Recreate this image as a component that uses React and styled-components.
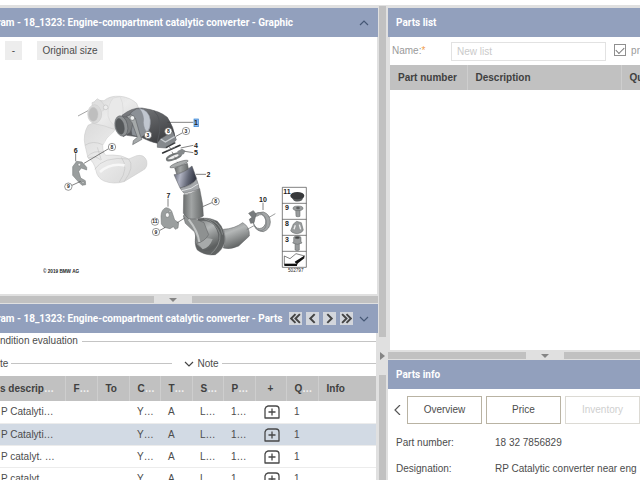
import { useState } from 'react'
import styled, { createGlobalStyle, ThemeProvider } from 'styled-components'

const theme = {
  colors: {
    header: '#92a0bd',
    bar: '#c1c1c1',
    edge: '#e0e0e0',
    muted: '#9a9a9a',
    selected: '#d2dae4',
  },
}

const partRows = [
  { name: 'P Catalyti…', c: 'Y…', t: 'A', s: 'L…', p: '1…', q: '1' },
  { name: 'P Catalyti…', c: 'Y…', t: 'A', s: 'L…', p: '1…', q: '1' },
  { name: 'P catalyt. …', c: 'Y…', t: 'A', s: 'L…', p: '1…', q: '1' },
  { name: 'P catalyt', c: 'Y…', t: 'A', s: 'L…', p: '1…', q: '1' },
]

const partColumns = [
  { label: 's descrip', cut: true, width: 65 },
  { label: 'F', cut: true, width: 32 },
  { label: 'To', width: 32 },
  { label: 'C', cut: true, width: 31 },
  { label: 'T', cut: true, width: 32 },
  { label: 'S', cut: true, width: 31 },
  { label: 'P', cut: true, width: 32 },
  { label: '+', width: 31, center: true },
  { label: 'Q', cut: true, width: 32 },
  { label: 'Info' },
]

const Chevron = ({ points, size = 10, stroke = '#465875', weight = 1.2 }) => (
  <svg width={size} height={size} viewBox="0 0 10 10" fill="none" stroke={stroke} strokeWidth={weight} aria-hidden="true">
    {points.map(p => <polyline key={p} points={p} />)}
  </svg>
)

const PlusBox = () => (
  <svg width="16" height="14" viewBox="0 0 16 14" fill="none" stroke="#484848" aria-hidden="true">
    <path d="M1 13V4Q1.5 1.500 4 1H12Q15 1 15 4V13Z" strokeWidth="1.3" strokeLinejoin="round" />
    <path d="M8 3.5V10.5M4.5 7H11.5" strokeWidth="1.3" />
  </svg>
)

const Callout = ({ x, y, children }) => (
  <g>
    <circle cx={x} cy={y} r="11" fill="#fff" stroke="#555" strokeWidth="1.8" />
    <text x={x} y={y + 5} textAnchor="middle" fontSize="15">{children}</text>
  </g>
)

const Diagram = () => (
  <DiagramSvg viewBox="-51 0 831 570" role="img" aria-label="Catalytic converter diagram">
    <defs>
      <linearGradient id="ghost" x1="0" y1="0" x2="1" y2="1">
        <stop offset="0" stopColor="#dadada" />
        <stop offset="0.45" stopColor="#ebebeb" />
        <stop offset="1" stopColor="#d4d4d4" />
      </linearGradient>
      <linearGradient id="dark" x1="0" y1="0" x2="0.6" y2="1">
        <stop offset="0" stopColor="#85878b" />
        <stop offset="0.35" stopColor="#66686b" />
        <stop offset="1" stopColor="#3d3e41" />
      </linearGradient>
      <linearGradient id="pipe" x1="0" y1="0" x2="1" y2="0">
        <stop offset="0" stopColor="#6b6e6e" />
        <stop offset="0.4" stopColor="#a2a5a5" />
        <stop offset="1" stopColor="#646767" />
      </linearGradient>
      <linearGradient id="flex" x1="0" y1="0" x2="1" y2="0.2">
        <stop offset="0" stopColor="#555969" />
        <stop offset="0.35" stopColor="#b0b3c2" />
        <stop offset="0.7" stopColor="#646877" />
        <stop offset="1" stopColor="#343744" />
      </linearGradient>
      <linearGradient id="outlet" x1="0" y1="0" x2="0.4" y2="1">
        <stop offset="0" stopColor="#808383" />
        <stop offset="0.4" stopColor="#b5b8b8" />
        <stop offset="1" stopColor="#5d6060" />
      </linearGradient>
    </defs>

    {/* second converter in the background */}
    <g stroke="#c6c6c6" strokeWidth="1.5">
      <path d="M54 84L84 68" stroke="#a5a5a5" strokeWidth="3" />
      <path d="M84 112Q68 140 75 172L84 210Q102 220 108 248Q112 270 132 279Q160 290 192 281L250 246Q264 238 260 218Q252 198 230 203L206 213Q184 200 158 201L138 202Q128 196 128 172Q136 150 162 130L170 110L110 100Z" fill="url(#ghost)" />
      <path d="M96 44Q112 34 132 38Q150 22 182 25Q210 28 230 46L244 80L220 112Q180 136 134 114L100 106Z" fill="url(#ghost)" />
      <path d="M180 26Q200 60 178 120Q152 112 144 84Q142 50 160 30Z" fill="#e9e9e9" stroke="#d2d2d2" />
      <ellipse cx="104" cy="78" rx="21" ry="28" fill="#d9d9d9" />
      <ellipse cx="100" cy="79" rx="14" ry="21" fill="#bebebe" />
      <path d="M104 40L112 32L124 40L136 56L128 70" fill="#dfdfdf" />
      <circle cx="137" cy="58" r="7" fill="#ededed" stroke="#b5b5b5" />
      <path d="M75 172Q98 156 128 170M82 206Q102 184 132 194M84 210Q108 202 122 216M104 244Q130 204 206 213Q226 236 192 281M184 208Q208 240 178 282M112 178L124 216" fill="none" stroke="#bdbdbd" />
      <path d="M120 252Q150 224 194 232" fill="none" stroke="#f7f7f7" strokeWidth="8" />
    </g>

    {/* brackets 6 and 7 */}
    <g stroke="#6c7070" strokeWidth="1.5" fill="#9a9e9e">
      <path d="M38 236L50 220L66 222L80 238V246L64 240L56 250L62 270L76 278L77 290L66 292L54 280L38 262Z" />
      <circle cx="58" cy="230" r="4" fill="#f0f0f0" />
      <circle cx="69" cy="284" r="3" fill="#e8e8e8" />
      <path d="M303 384Q304 364 318 359Q334 360 338 378L344 396L356 404L354 420L346 424L340 416L330 422L312 418L304 408Z" />
      <ellipse cx="322" cy="381" rx="6" ry="7" fill="#f5f5f5" />
      <circle cx="330" cy="370" r="3" fill="#eee" />
    </g>

    {/* converter */}
    <g stroke="#505357" strokeWidth="1.5">
      <path d="M186 82Q216 58 246 60Q300 68 322 88Q342 118 346 150L320 172L292 166Q270 162 244 148L200 142Z" fill="url(#dark)" />
      <path d="M230 62Q262 58 272 94Q274 124 262 136L244 148L216 142L206 84Q212 70 230 62Z" fill="#8b9096" />
      <path d="M238 61Q268 66 271 98Q272 120 262 132Q252 126 250 104Q254 82 238 61Z" fill="#c0c6cf" stroke="#888d94" />
      <path d="M282 68Q312 96 292 162" fill="none" stroke="#55585c" strokeWidth="3" />
      <path d="M176 86L214 88Q224 104 210 134L190 146Z" fill="#7b7e80" />
      <ellipse cx="184" cy="114" rx="19" ry="31" transform="rotate(-12 184 114)" fill="#8e9193" />
      <ellipse cx="180" cy="115" rx="12" ry="24" transform="rotate(-12 180 115)" fill="#55585a" />
      <path d="M200 84L214 80L226 90L240 140L246 154L218 170L220 158L232 148L216 104Z" fill="#a5a9aa" />
      <circle cx="217" cy="90" r="7" fill="#f0f2f2" />
      <path d="M292 164L302 152L338 130L349 155L340 166L318 180L292 178Z" fill="#85898d" />
      <path d="M302 153L316 162L344 146" fill="none" stroke="#c9cdd1" strokeWidth="4" />
      <path d="M318 179L346 164" fill="none" stroke="#3c3e41" strokeWidth="4" />
    </g>

    {/* gasket and clamp */}
    <path d="M308 195L360 172" stroke="#303234" strokeWidth="5" strokeLinecap="round" />
    <path d="M322 187L346 177" stroke="#a9abad" strokeWidth="1.5" />
    <ellipse cx="342" cy="206" rx="23" ry="7" transform="rotate(-22 342 206)" fill="#eee" stroke="#75797a" strokeWidth="6" />
    <path d="M352 190L366 182L376 188L372 198L356 204Z" fill="#85898b" />
    <path d="M328 176L354 226" stroke="#555" strokeWidth="2" strokeDasharray="10 7" />

    {/* downpipe */}
    <g stroke="#5a5d5e" strokeWidth="1.5">
      <path d="M344 240L382 226L386 246L350 258Z" fill="url(#pipe)" />
      <ellipse cx="357" cy="228" rx="29" ry="6" transform="rotate(-20 357 228)" fill="#a9acac" />
      <path d="M342 260Q368 258 396 234L410 272Q398 292 360 300Z" fill="url(#flex)" />
      <path d="M360 300Q394 294 410 274L415 290L418 304L372 316Z" fill="#a5a8ab" />
      <path d="M366 308Q396 304 414 288" fill="none" stroke="#e1e3e4" strokeWidth="3" />
      <path d="M414 392Q444 386 472 400Q496 424 494 460Q490 484 466 500Q436 504 412 486Q402 470 408 440Z" fill="#606363" />
      <path d="M414 400Q440 392 462 410Q482 436 474 466Q462 488 436 488Q414 480 406 462Z" fill="url(#outlet)" />
      <path d="M432 392Q468 402 480 438Q482 474 452 498M444 392Q482 404 488 440" fill="none" stroke="#8e9191" strokeWidth="2.5" />
      <path d="M412 466Q430 444 458 454Q448 480 428 484Z" fill="#a7aaaa" stroke="none" />
      <path d="M370 384L376 374L404 392L432 404L446 440Q434 460 412 466L404 432L376 406Z" fill="#8e9191" />
      <path d="M371 320Q394 318 419 302L428 350L430 384Q414 396 386 392L370 376Z" fill="url(#pipe)" />
      <path d="M386 394Q414 430 418 462" fill="none" stroke="#c3c6c6" strokeWidth="6" />
      <path d="M490 424Q524 422 548 404Q570 416 568 444L536 474Q512 486 490 480Q500 452 490 424Z" fill="url(#outlet)" />
    </g>

    {/* clamp 10 */}
    <g fill="none" stroke="#696c6d" strokeWidth="2">
      <path d="M560 425L582 413M622 391L646 377" />
      <path d="M580 386Q592 370 610 372Q630 378 631 402Q630 424 610 431Q588 430 582 410Q590 426 606 420Q622 410 616 388Q606 374 592 384Z" fill="#a2a5a6" />
      <ellipse cx="599" cy="401" rx="19" ry="27" transform="rotate(-16 599 401)" stroke="#84888a" strokeWidth="3" />
      <path d="M566 376L580 368L588 378L582 404L572 406L568 394L576 388Z" fill="#777b7d" />
    </g>

    <g stroke="#444" strokeWidth="2" fill="none">
      <path d="M322 103H400M348 145L368 134M362 180L400 172M374 190L400 194M408 259H438M428 356L458 343M47 196V220M72 226L146 182M36 292L62 280M324 332V356M298 428L316 418M352 404L374 390M609 344V366" />
    </g>
    <rect x="402" y="93" width="13" height="23" fill="#8fbcf0" stroke="#2f7fd0" strokeWidth="2" />
    <Callout x={264} y={141}>3</Callout>
    <Callout x={325} y={130}>8</Callout>
    <Callout x={378} y={129}>3</Callout>
    <Callout x={156} y={177}>8</Callout>
    <Callout x={467} y={340}>8</Callout>
    <Callout x={25} y={296}>9</Callout>
    <Callout x={288} y={432}>9</Callout>
    <Callout x={285} y={401}>11</Callout>
    <g fontSize="21" textAnchor="middle">
      <text x="408" y="112">1</text>
      <text x="408" y="179">4</text>
      <text x="408" y="201">5</text>
      <text x="445" y="266">2</text>
      <text x="47" y="194">6</text>
      <text x="325" y="331">7</text>
      <text x="609" y="342">10</text>
    </g>

    {/* fastener legend */}
    <path d="M667 298H739V538H667ZM667 346H739M667 394H739M667 442H739M667 490H739" fill="none" stroke="#444" strokeWidth="2" />
    <g fontSize="21">
      <text x="670" y="317">11</text>
      <text x="675" y="365">9</text>
      <text x="675" y="413">8</text>
      <text x="675" y="461">3</text>
    </g>
    <path d="M694 328L702 338Q714 344 726 337L731 326Z" fill="#56595a" />
    <ellipse cx="712" cy="323" rx="21" ry="11" fill="#37393b" />
    <g fill="#989b9c" stroke="#5f6263" strokeWidth="1.5">
      <path d="M707 364L708 385Q714 388 720 385V364Z" />
      <ellipse cx="714" cy="361" rx="15" ry="7" />
      <ellipse cx="714" cy="360" rx="5" ry="3" fill="#555" />
      <path d="M692 428L700 408L710 400L724 404L730 426Q726 436 712 437Q696 436 692 428Z" />
      <path d="M702 424L706 412M718 410L722 424" fill="none" stroke="#eee" strokeWidth="4" />
      <path d="M705 463V486Q712 490 718 486V463Z" />
      <path d="M701 448L706 444H718L723 448V460L726 465Q712 473 698 465L701 460Z" />
      <ellipse cx="712" cy="449" rx="7" ry="3" fill="#444" />
    </g>
    <path d="M673 504L690 512L708 497L734 504L706 524H712V529H673Z" fill="#fff" stroke="#444" strokeWidth="2" />
    <path d="M673 527H711V534H673ZM704 521L733 503V511L711 528Z" fill="#111" />
    <text x="684" y="553" fontSize="14" className="thin">502797</text>
    <text x="-51" y="555" fontSize="14">© 2019 BMW AG</text>
  </DiagramSvg>
)

const App = () => {
  const [selected, setSelected] = useState(1)

  return (
    <ThemeProvider theme={theme}>
      <GlobalStyle />
      <Page>
        <Column>
          <PanelHeader>
            <Title $clipped>ram - 18_1323: Engine-compartment catalytic converter - Graphic</Title>
            <IconButton aria-label="Collapse graphic">
              <Chevron points={['1,7 5,3 9,7']} />
            </IconButton>
          </PanelHeader>
          <GraphicBody>
            <Toolbar>
              <ToolButton>-</ToolButton>
              <ToolButton $wide>Original size</ToolButton>
            </Toolbar>
            <Diagram />
          </GraphicBody>
          <Splitter>
            <Handle $start={154}><Arrow /></Handle>
          </Splitter>
          <PanelHeader>
            <Title $clipped>ram - 18_1323: Engine-compartment catalytic converter - Parts</Title>
            <Pager>
              <PageButton aria-label="First"><Chevron size={11} stroke="#444" weight={1.8} points={['5,1 1,5 5,9', '9,1 5,5 9,9']} /></PageButton>
              <PageButton aria-label="Previous"><Chevron size={11} stroke="#444" weight={1.8} points={['7,1 3,5 7,9']} /></PageButton>
              <PageButton aria-label="Next"><Chevron size={11} stroke="#444" weight={1.8} points={['3,1 7,5 3,9']} /></PageButton>
              <PageButton aria-label="Last"><Chevron size={11} stroke="#444" weight={1.8} points={['1,1 5,5 1,9', '5,1 9,5 5,9']} /></PageButton>
            </Pager>
            <IconButton aria-label="Expand parts">
              <Chevron points={['1,3 5,7 9,3']} />
            </IconButton>
          </PanelHeader>
          <PartsBody>
            <Group>
              <span>ndition evaluation</span>
              <Rule />
            </Group>
            <NoteRow>
              <NoteCell>
                <span>te</span>
                <Rule />
              </NoteCell>
              <NoteCell>
                <Chevron stroke="#444" points={['1,3 5,7 9,3']} />
                <span>Note</span>
                <Rule />
              </NoteCell>
            </NoteRow>
            <PartsTable>
              <colgroup>
                {partColumns.map(col => <Col key={col.label} $width={col.width} />)}
              </colgroup>
              <thead>
                <tr>
                  {partColumns.map((col, i) => (
                    <HeadCell key={col.label} $center={col.center} $flush={i === 0}>
                      {col.label}{col.cut && <Dots>…</Dots>}
                    </HeadCell>
                  ))}
                </tr>
              </thead>
              <tbody>
                {partRows.map((row, i) => (
                  <PartRow key={i} $selected={i === selected} onClick={() => setSelected(i)}>
                    <Cell>{row.name}</Cell>
                    <Cell />
                    <Cell />
                    <Cell>{row.c}</Cell>
                    <Cell>{row.t}</Cell>
                    <Cell>{row.s}</Cell>
                    <Cell>{row.p}</Cell>
                    <Cell $center>
                      <IconButton aria-label="Add part"><PlusBox /></IconButton>
                    </Cell>
                    <Cell>{row.q}</Cell>
                    <Cell />
                  </PartRow>
                ))}
              </tbody>
            </PartsTable>
          </PartsBody>
        </Column>

        <Divider>
          <DividerHandle><Arrow $right /></DividerHandle>
        </Divider>

        <Column>
          <PanelHeader $inset>
            <Title>Parts list</Title>
          </PanelHeader>
          <ListBody>
            <NameRow>
              <NameLabel htmlFor="list-name">Name:<Star>*</Star></NameLabel>
              <NameInput id="list-name" placeholder="New list" />
              <CheckLabel>
                <CheckBox type="checkbox" defaultChecked />
                pr
              </CheckLabel>
            </NameRow>
            <PartsTable>
              <colgroup>
                <Col $width={77} />
                <Col $width={154} />
                <Col />
              </colgroup>
              <thead>
                <tr>
                  <HeadCell>Part number</HeadCell>
                  <HeadCell>Description</HeadCell>
                  <HeadCell>Qu</HeadCell>
                </tr>
              </thead>
            </PartsTable>
          </ListBody>
          <Splitter>
            <Handle $start={138}><Arrow /></Handle>
          </Splitter>
          <PanelHeader $inset>
            <Title>Parts info</Title>
          </PanelHeader>
          <Tabs>
            <IconButton aria-label="Previous tabs">
              <Chevron stroke="#555" points={['7,0 2,5 7,10']} />
            </IconButton>
            <Tab>Overview</Tab>
            <Tab>Price</Tab>
            <Tab disabled>Inventory</Tab>
          </Tabs>
          <Details>
            <dt>Part number:</dt>
            <dd>18 32 7856829</dd>
            <dt>Designation:</dt>
            <dd>RP Catalytic converter near eng</dd>
          </Details>
        </Column>
      </Page>
    </ThemeProvider>
  )
}

const GlobalStyle = createGlobalStyle`
  * {
    box-sizing: border-box;
  }

  body {
    margin: 0;
    background-color: #fff;
    color: #4c4c4c;
    font: 10px/12px "Liberation Sans", Arial, sans-serif;
  }

  button, input {
    font: inherit;
    color: inherit;
  }
`

const Page = styled.main`
  display: grid;
  grid-template-columns: minmax(0, 3fr) 10px minmax(0, 2fr);
  height: 100vh;
  padding-top: 5px;
  overflow: hidden;
`

const Column = styled.section`
  display: flex;
  flex-direction: column;
  min-width: 0;
  min-height: 0;
  overflow: hidden;
  border-top: 3px solid ${props => props.theme.colors.edge};
`

const PanelHeader = styled.header`
  display: flex;
  flex: none;
  align-items: center;
  height: 29px;
  padding: 0 9px 0 ${props => props.$inset ? '8px' : '0'};
  background-color: ${props => props.theme.colors.header};
`

const Title = styled.h2`
  flex: 1;
  margin: 0 0 0 ${props => props.$clipped ? '-3px' : '0'};
  color: #fff;
  font-family: Roboto, "Liberation Sans", sans-serif;
  font-size: 10px;
  font-weight: bold;
  white-space: nowrap;
`

const IconButton = styled.button`
  display: inline-flex;
  flex: none;
  padding: 0;
  border: 0;
  background: none;
  cursor: pointer;
`

const Pager = styled.div`
  display: flex;
  gap: 4px;
  margin-right: 6px;
`

const PageButton = styled.button`
  display: flex;
  align-items: center;
  justify-content: center;
  width: 13px;
  height: 13px;
  padding: 0;
  border: 0;
  background-color: #d3d6dc;
  cursor: pointer;
`

const GraphicBody = styled.div`
  flex: none;
  padding: 4px 0 16px;
  border-right: 1px solid ${props => props.theme.colors.edge};
`

const Toolbar = styled.div`
  display: flex;
  gap: 15px;
  padding-left: 5px;
`

const ToolButton = styled.button`
  width: ${props => props.$wide ? '66px' : '17px'};
  height: 19px;
  padding: 0;
  border: 0;
  background-color: #ededed;
`

const DiagramSvg = styled.svg`
  display: block;
  width: 277px;
  height: 190px;
  margin: 28px 0 0 43px;
  font-family: "Liberation Sans", Arial, sans-serif;
  font-weight: bold;
  fill: #222;

  .thin {
    font-weight: normal;
  }
`

const Splitter = styled.div`
  display: flex;
  flex: none;
  height: 10px;
  border: solid ${props => props.theme.colors.edge};
  border-width: 2px 0 1px;
  background-color: ${props => props.theme.colors.bar};
`

const Handle = styled.div`
  display: flex;
  align-items: center;
  justify-content: center;
  width: 38px;
  margin-left: ${props => props.$start}px;
  background-color: ${props => props.theme.colors.edge};
`

const Arrow = styled.span`
  border: 4px solid transparent;
  border-bottom-width: 0;
  border-top-color: #858585;
  ${props => props.$right && `
    border-width: 4px 0 4px 5px;
    border-color: transparent transparent transparent #858585;
  `}
`

const PartsBody = styled.div`
  flex: 1;
  min-height: 0;
  border-right: 2px solid ${props => props.theme.colors.edge};
`

const Group = styled.div`
  display: flex;
  align-items: center;
  gap: 4px;
  height: 16px;
`

const Rule = styled.hr`
  flex: 1;
  height: 1px;
  margin: 0;
  border: 0;
  background-color: #c4c4c4;
`

const NoteRow = styled.div`
  display: grid;
  grid-template-columns: 9fr 10fr;
  gap: 12px;
  height: 27px;
  padding-top: 2px;
`

const NoteCell = styled.div`
  display: flex;
  align-items: center;
  gap: 3px;
`

const PartsTable = styled.table`
  width: 100%;
  border-collapse: collapse;
  table-layout: fixed;
`

const Col = styled.col`
  width: ${props => props.$width ? `${props.$width}px` : 'auto'};
`

const HeadCell = styled.th`
  height: 25px;
  padding: 0 0 0 ${props => props.$center || props.$flush ? '0' : '8px'};
  overflow: hidden;
  border-left: 1px solid #cecece;
  background-color: ${props => props.theme.colors.bar};
  color: #404040;
  text-align: ${props => props.$center ? 'center' : 'left'};
  white-space: nowrap;

  &:first-child {
    border-left: 0;
  }
`

const Dots = styled.span`
  color: #f2f2f2;
`

const PartRow = styled.tr`
  border-bottom: 1px solid #ececec;
  background-color: ${props => props.$selected ? props.theme.colors.selected : '#fff'};
`

const Cell = styled.td`
  height: 22px;
  padding: 1px 0 0 ${props => props.$center ? '3px' : '8px'};
  overflow: hidden;
  line-height: 12px;
  text-align: ${props => props.$center ? 'center' : 'left'};
  white-space: nowrap;

  &:first-child {
    padding-left: 1px;
  }

  ${IconButton} {
    vertical-align: middle;
  }
`

const Divider = styled.div`
  display: flex;
  flex-direction: column;
  justify-content: center;
  padding-top: 225px;
  border: solid ${props => props.theme.colors.edge};
  border-width: 1px 2px 0 1px;
  background-color: ${props => props.theme.colors.bar};
`

const DividerHandle = styled.div`
  display: flex;
  align-items: center;
  justify-content: center;
  height: 38px;
  background-color: ${props => props.theme.colors.edge};
`

const ListBody = styled.div`
  flex: 1;
  min-height: 0;
  border-left: 2px solid ${props => props.theme.colors.edge};
`

const NameRow = styled.div`
  display: flex;
  align-items: center;
  height: 28px;
  padding-left: 2px;
  color: ${props => props.theme.colors.muted};
  white-space: nowrap;
`

const NameLabel = styled.label`
  flex: none;
  width: 59px;
`

const Star = styled.span`
  color: #f0a050;
`

const NameInput = styled.input`
  flex: 1;
  min-width: 0;
  height: 19px;
  padding: 0 5px;
  border: 1px solid #e2e2e2;

  &::placeholder {
    color: #cacaca;
  }
`

const CheckLabel = styled.label`
  display: flex;
  flex: none;
  align-items: center;
  gap: 5px;
  margin-left: 8px;
`

const CheckBox = styled.input`
  appearance: none;
  display: grid;
  place-items: center;
  width: 12px;
  height: 12px;
  margin: 0 0 3px;
  border: 1px solid #8f8f8f;

  &:checked::before {
    content: "";
    width: 7px;
    height: 4px;
    border: solid #777;
    border-width: 0 0 1px 1px;
    transform: rotate(-45deg);
  }
`

const Tabs = styled.nav`
  display: flex;
  flex: none;
  align-items: center;
  gap: 4px;
  padding: 7px 0 6px 5px;
`

const Tab = styled.button`
  flex: none;
  width: 75px;
  height: 28px;
  padding: 0;
  border: 1px solid #b9b3a3;
  background-color: #fff;

  &:disabled {
    border-color: #dcdad4;
    color: #cfcfcf;
  }
`

const Details = styled.dl`
  display: grid;
  flex: none;
  grid-template-columns: 99px 1fr;
  gap: 14px 0;
  margin: 0;
  padding: 7px 0 5px 8px;
  white-space: nowrap;

  dd {
    margin: 0;
  }
`

export default App
